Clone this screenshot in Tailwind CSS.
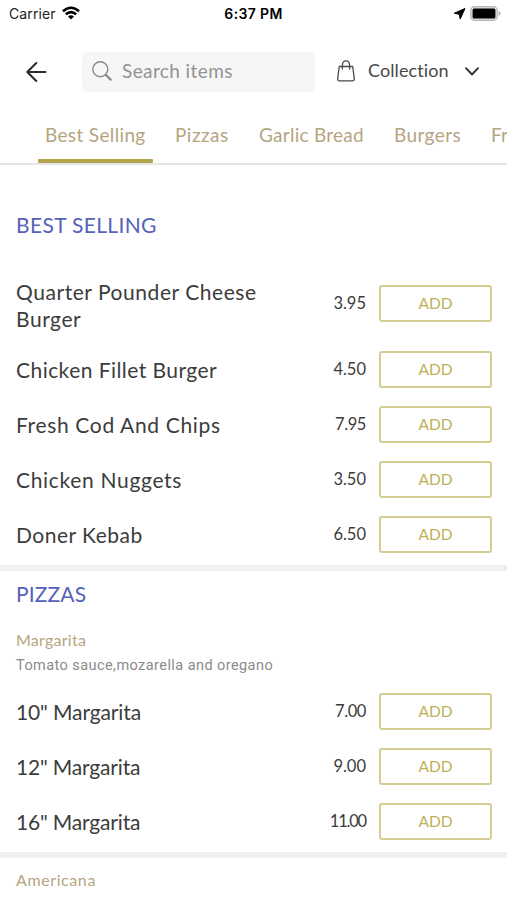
<!DOCTYPE html>
<html lang="en">
<head>
<meta charset="utf-8">
<title>Menu</title>
<script src="https://cdn.jsdelivr.net/npm/@tailwindcss/browser@4"></script>
</head>
<body class="bg-white">
<div class="w-[507px] h-[900px] overflow-hidden flex flex-col bg-white font-['Lato',sans-serif] text-[#3c3c3c]">
  <div class="h-7 shrink-0 grid grid-cols-3 items-center pl-[9px] pr-[7px] font-['Inter',sans-serif] text-black">
    <div class="flex items-center gap-[6px]">
      <span class="text-[14px] leading-5 tracking-[0.1px] text-[#222]">Carrier</span>
      <svg class="w-[18px] h-[14px] -mt-[3px]" viewBox="0 0 19 14" fill="none" stroke="#000" stroke-width="2.7"><path d="M1 5.2Q9.500-2.200 18 5.200"/><path d="M4 8.400Q9.500 3.600 15 8.400"/><path d="M9.500 13.800L6.300 10.600Q9.500 8 12.700 10.600Z" fill="#000" stroke="none"/></svg>
    </div>
    <span class="-ml-[2px] text-[14px] leading-5 font-semibold tracking-[0.35px] text-center whitespace-nowrap">6:37 PM</span>
    <div class="flex items-center justify-end gap-[4px] -mt-[2px]">
      <svg class="w-[13px] h-[13px]" viewBox="0 0 13 13"><path d="M12 1.500L1.300 6.200L6.300 7.300L7.200 12Z" fill="#000" stroke="#000" stroke-width="1" stroke-linejoin="round"/></svg>
      <svg class="w-[31px] h-[15px] mr-[-1px]" viewBox="0 0 31 15"><rect x=".7" y=".7" width="26.600" height="13.600" rx="3.800" fill="#ddd" stroke="#b5b5b5" stroke-width="1.200"/><rect x="2.600" y="2.500" width="22.800" height="10" rx="1.500" fill="#000"/><path d="M28.700 5v5q2-.8 2-2.500t-2-2.500Z" fill="#b5b5b5"/></svg>
    </div>
  </div>
  <header class="h-[92px] shrink-0 flex items-center pb-[5px] pl-[26px] pr-[28px]">
    <svg class="w-[21px] h-[20px]" viewBox="0 0 21 20" fill="none" stroke="#2d2d2d" stroke-width="2" stroke-linecap="round" stroke-linejoin="round"><path d="M19.500 10H1.500M10.300 1L1.300 10l9 9"/></svg>
    <div class="ml-[35px] w-[233px] h-[40px] rounded-[6px] bg-[#f6f6f6] flex items-center pl-[10px] gap-[10px]">
      <svg class="w-5 h-5 -mt-[2px]" viewBox="0 0 20 20" fill="none" stroke="#888" stroke-linecap="round"><circle cx="8.300" cy="8.300" r="7.500" stroke-width="1.400"/><path d="M13.800 13.800l4.800 4.800" stroke-width="2.200"/></svg>
      <span class="-mt-[2px] text-[19px] leading-6 tracking-[0.4px] text-[#929292]">Search items</span>
    </div>
    <svg class="ml-[22px] -mt-[2px] w-[18px] h-[22px]" viewBox="0 0 18 22" fill="none" stroke="#4a4a4a" stroke-width="1.300" stroke-linejoin="round" stroke-linecap="round"><path d="M2.300 6.500h13.400L17.300 18.500q.2 2.300-2 2.300H2.700q-2.200 0-2-2.300Z"/><path d="M5.400 9V5Q5.600.9 9 .9T12.600 5V9"/></svg>
    <span class="ml-[13px] -mt-[3px] w-[81px] text-[18px] leading-6 tracking-[0.1px] text-[#474747]">Collection</span>
    <svg class="ml-auto w-[14px] h-[9px]" viewBox="0 0 14 9" fill="none" stroke="#333" stroke-width="1.900" stroke-linecap="round" stroke-linejoin="round"><path d="M1 1.200l6 6.300 6-6.300"/></svg>
  </header>
  <nav class="h-[45px] shrink-0 flex border-b-2 border-[#e6e6e6] pl-[38px] text-[19px] leading-[29px] text-[#b5a581] whitespace-nowrap">
    <div class="relative shrink-0 h-full w-[115px] px-[7px] tracking-[0.35px]">Best Selling<span class="absolute left-0 bottom-0 w-[115px] h-[4px] rounded-[1px] bg-[#b2a44c]"></span></div>
    <div class="shrink-0 w-[84px] pl-[22px] tracking-[0.5px]">Pizzas</div>
    <div class="shrink-0 w-[135px] pl-[22px] tracking-[0.25px]">Garlic Bread</div>
    <div class="shrink-0 w-[97px] pl-[22px] tracking-[0.4px]">Burgers</div>
    <div class="shrink-0 pl-[22px]">Fries</div>
  </nav>
  <main class="flex-1">
    <section class="pl-4 pr-[15px] pt-[45px] border-b-[6px] border-[#efefef] h-[406px]">
      <h2 class="text-[21px] leading-[29px] tracking-[0.35px] text-[#5562b8]">BEST SELLING</h2>
      <ul class="pt-[28px] text-[21px] leading-[27px]">
        <li class="h-[75px] flex items-center"><span class="w-[260px] tracking-[0.55px]">Quarter Pounder Cheese Burger</span><span class="ml-auto mr-[13px] mb-[3px] text-[16.5px]">3.95</span><button class="w-[113px] h-[37px] mb-[3px] border-2 border-[#d5cc93] rounded-[3px] text-[15.5px] leading-5 text-[#beb056]">ADD</button></li>
        <li class="h-[55px] flex items-center"><span class="tracking-[0.45px]">Chicken Fillet Burger</span><span class="ml-auto mr-[13px] mb-[1px] text-[16.5px]">4.50</span><button class="w-[113px] h-[37px] mb-[1px] border-2 border-[#d5cc93] rounded-[3px] text-[15.5px] leading-5 text-[#beb056]">ADD</button></li>
        <li class="h-[55px] flex items-center"><span class="tracking-[0.65px]">Fresh Cod And Chips</span><span class="ml-auto mr-[13px] mb-[1px] text-[16.5px] tracking-[-0.4px]">7.95</span><button class="w-[113px] h-[37px] mb-[1px] border-2 border-[#d5cc93] rounded-[3px] text-[15.5px] leading-5 text-[#beb056]">ADD</button></li>
        <li class="h-[55px] flex items-center"><span class="tracking-[0.68px]">Chicken Nuggets</span><span class="ml-auto mr-[13px] mb-[1px] text-[16.5px]">3.50</span><button class="w-[113px] h-[37px] mb-[1px] border-2 border-[#d5cc93] rounded-[3px] text-[15.5px] leading-5 text-[#beb056]">ADD</button></li>
        <li class="h-[55px] flex items-center"><span class="tracking-[0.5px]">Doner Kebab</span><span class="ml-auto mr-[13px] mb-[1px] text-[16.5px]">6.50</span><button class="w-[113px] h-[37px] mb-[1px] border-2 border-[#d5cc93] rounded-[3px] text-[15.5px] leading-5 text-[#beb056]">ADD</button></li>
      </ul>
    </section>
    <section class="pl-4 pr-[15px] pt-[8px] border-b-[6px] border-[#efefef] h-[287px]">
      <h2 class="text-[21px] leading-[29px] tracking-[0.15px] text-[#5562b8]">PIZZAS</h2>
      <h3 class="pt-[19px] text-[16px] leading-[26px] tracking-[0.25px] text-[#b5a581]">Margarita</h3>
      <p class="font-['Roboto',sans-serif] text-[14.5px] leading-[26px] tracking-[0.43px] text-[#8b8b8b]">Tomato sauce,mozarella and oregano</p>
      <ul class="pt-[5px] text-[21px] leading-[27px]">
        <li class="h-[55px] flex items-center"><span class="tracking-[-0.12px]">10" Margarita</span><span class="ml-auto mr-[13px] mb-[1px] text-[16.5px] tracking-[-0.4px]">7.00</span><button class="w-[113px] h-[37px] mb-[1px] border-2 border-[#d5cc93] rounded-[3px] text-[15.5px] leading-5 text-[#beb056]">ADD</button></li>
        <li class="h-[55px] flex items-center"><span class="tracking-[-0.17px]">12" Margarita</span><span class="ml-auto mr-[13px] mb-[1px] text-[16.5px]">9.00</span><button class="w-[113px] h-[37px] mb-[1px] border-2 border-[#d5cc93] rounded-[3px] text-[15.5px] leading-5 text-[#beb056]">ADD</button></li>
        <li class="h-[55px] flex items-center"><span class="tracking-[-0.17px]">16" Margarita</span><span class="ml-auto mr-[13px] mb-[1px] text-[16.5px] tracking-[-1.2px]">11.00</span><button class="w-[113px] h-[37px] mb-[1px] border-2 border-[#d5cc93] rounded-[3px] text-[15.5px] leading-5 text-[#beb056]">ADD</button></li>
      </ul>
    </section>
    <section class="pl-4 pt-[9px]">
      <h3 class="text-[16px] leading-[26px] tracking-[0.6px] text-[#b5a581]">Americana</h3>
    </section>
  </main>
</div>
</body>
</html>
